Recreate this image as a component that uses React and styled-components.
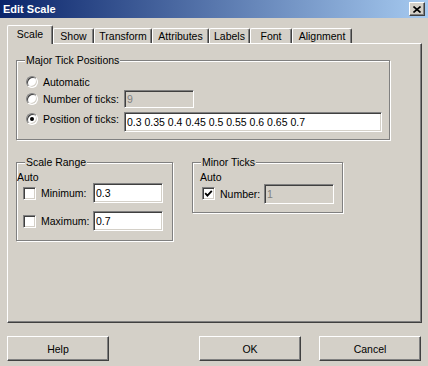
import styled, { createGlobalStyle } from 'styled-components'

const GlobalStyle = createGlobalStyle`
  body {
    margin: 0;
    background: #d4d0c8;
    font-family: "Liberation Sans", Arial, sans-serif;
    font-size: 10.5px;
    color: #000;
  }
  * { box-sizing: border-box; }
`

const tabs = [
  { label: 'Scale', w: 46, active: true },
  { label: 'Show', w: 41 },
  { label: 'Transform', w: 58 },
  { label: 'Attributes', w: 57 },
  { label: 'Labels', w: 41 },
  { label: 'Font', w: 42 },
  { label: 'Alignment', w: 60 }
]

const CloseGlyph = () => (
  <svg width='8' height='7' viewBox='0 0 8 7'>
    <path d='M0.5 0.5 L7.5 6.5 M7.5 0.5 L0.5 6.5' stroke='#000' strokeWidth='1.6' />
  </svg>
)

const CheckGlyph = () => (
  <svg width='9' height='9' viewBox='0 0 9 9'>
    <polyline points='1.2,4.2 3.4,6.6 7.8,1.8' fill='none' stroke='#000' strokeWidth='1.8' />
  </svg>
)

export default function App () {
  return (
    <>
      <GlobalStyle />
      <Window>
        <TitleBar>
          <span>Edit Scale</span>
          <CloseBtn><CloseGlyph /></CloseBtn>
        </TitleBar>
        <Body>
          <TabRow>
            {tabs.map(t => (
              <Tab key={t.label} $w={t.w} $active={t.active}>{t.label}</Tab>
            ))}
          </TabRow>
          <Panel>
            <Group $w={374} $h={80}>
              <Caption>Major Tick Positions</Caption>
              <GroupBody $pt={13} $pl={9}>
                <Row $h={16}>
                  <Radio />
                  <OptionLabel $w={81}>Automatic</OptionLabel>
                </Row>
                <Row $h={18}>
                  <Radio />
                  <OptionLabel $w={81}>Number of ticks:</OptionLabel>
                  <TextField $w={70} $h={18} disabled value='9' readOnly />
                </Row>
                <Row $h={20} $mt={4} $align='flex-start'>
                  <Radio $checked $mt={1} />
                  <OptionLabel $w={81}>Position of ticks:</OptionLabel>
                  <TextField $w={258} $h={20} value='0.3 0.35 0.4 0.45 0.5 0.55 0.6 0.65 0.7' readOnly />
                </Row>
              </GroupBody>
            </Group>
            <GroupRow>
              <Group $w={157} $h={79}>
                <Caption>Scale Range</Caption>
                <GroupBody $pt={8} $pl={0}>
                  <AutoText>Auto</AutoText>
                  <Row $h={20}>
                    <CheckBox $ml={6} />
                    <OptionLabel $w={52}>Minimum:</OptionLabel>
                    <TextField $w={70} $h={20} value='0.3' readOnly />
                  </Row>
                  <Row $h={20} $mt={8}>
                    <CheckBox $ml={6} />
                    <OptionLabel $w={52}>Maximum:</OptionLabel>
                    <TextField $w={70} $h={20} value='0.7' readOnly />
                  </Row>
                </GroupBody>
              </Group>
              <Group $w={151} $h={51}>
                <Caption>Minor Ticks</Caption>
                <GroupBody $pt={8} $pl={7}>
                  <AutoText>Auto</AutoText>
                  <Row $h={21}>
                    <CheckBox $ml={2}><CheckGlyph /></CheckBox>
                    <OptionLabel $w={44}>Number:</OptionLabel>
                    <TextField $w={70} $h={20} disabled value='1' readOnly />
                  </Row>
                </GroupBody>
              </Group>
            </GroupRow>
          </Panel>
          <ButtonRow>
            <PushButton>Help</PushButton>
            <ButtonGroup>
              <PushButton>OK</PushButton>
              <PushButton>Cancel</PushButton>
            </ButtonGroup>
          </ButtonRow>
        </Body>
      </Window>
    </>
  )
}

const Window = styled.div`
  width: 428px;
  height: 366px;
  background: #d4d0c8;
  display: flex;
  flex-direction: column;
  overflow: hidden;
`

const TitleBar = styled.div`
  height: 18px;
  display: flex;
  align-items: center;
  justify-content: space-between;
  padding: 0 3px;
  background: linear-gradient(to right, #0a246a, #a6caf0);
  color: #fff;
  font-weight: bold;
  font-size: 11px;
`

const CloseBtn = styled.button`
  width: 16px;
  height: 14px;
  padding: 0;
  background: #d4d0c8;
  border: 1px solid;
  border-color: #fff #404040 #404040 #fff;
  box-shadow: inset -1px -1px #808080;
  display: flex;
  align-items: center;
  justify-content: center;
`

const Body = styled.div`
  display: flex;
  flex-direction: column;
  padding: 7px 7px 0;
`

const TabRow = styled.div`
  display: flex;
  align-items: flex-end;
  height: 18px;
`

const Tab = styled.div`
  width: ${p => p.$w}px;
  height: ${p => p.$active ? 19 : 15}px;
  margin-bottom: ${p => p.$active ? -1 : 0}px;
  padding-bottom: ${p => p.$active ? 3 : 0}px;
  position: relative;
  z-index: ${p => p.$active ? 1 : 0};
  background: #d4d0c8;
  border-top: 1px solid #fff;
  border-left: 1px solid #fff;
  border-right: 1px solid #404040;
  border-radius: 2px 2px 0 0;
  box-shadow: inset -1px 0 #808080;
  display: flex;
  align-items: center;
  justify-content: center;
  white-space: nowrap;
`

const Panel = styled.div`
  width: 415px;
  height: 280px;
  border-top: 1px solid #fff;
  border-left: 1px solid #fff;
  border-right: 1px solid #404040;
  border-bottom: 1px solid #404040;
  box-shadow: inset -1px -1px #808080;
  padding: 16px 0 0 8px;
  display: flex;
  flex-direction: column;
  gap: 22px;
`

const Group = styled.div`
  position: relative;
  width: ${p => p.$w}px;
  height: ${p => p.$h}px;
  border: 1px solid #808080;
  box-shadow: inset 1px 1px #fff, 1px 1px #fff;
  flex-shrink: 0;
`

const Caption = styled.span`
  position: absolute;
  top: -7px;
  left: 8px;
  padding: 0 1px;
  line-height: 13px;
  background: #d4d0c8;
`

const GroupBody = styled.div`
  display: flex;
  flex-direction: column;
  padding-top: ${p => p.$pt}px;
  padding-left: ${p => p.$pl}px;
`

const GroupRow = styled.div`
  display: flex;
  align-items: flex-start;
  gap: 19px;
`

const Row = styled.div`
  display: flex;
  align-items: ${p => p.$align || 'center'};
  height: ${p => p.$h}px;
  margin-top: ${p => p.$mt || 0}px;
`

const AutoText = styled.div`
  line-height: 12px;
  height: 12px;
`

const Radio = styled.span`
  position: relative;
  width: 12px;
  height: 12px;
  margin-top: ${p => p.$mt || 0}px;
  flex-shrink: 0;
  border-radius: 50%;
  background: #fff;
  border: 1px solid;
  border-color: #808080 #fff #fff #808080;
  box-shadow: inset 1px 1px #404040, inset -1px -1px #d4d0c8;
  &::after {
    content: '';
    display: ${p => p.$checked ? 'block' : 'none'};
    position: absolute;
    left: 3px;
    top: 3px;
    width: 4px;
    height: 4px;
    border-radius: 50%;
    background: #000;
  }
`

const CheckBox = styled.span`
  width: 13px;
  height: 13px;
  margin-left: ${p => p.$ml}px;
  flex-shrink: 0;
  background: #fff;
  border: 1px solid;
  border-color: #808080 #fff #fff #808080;
  box-shadow: inset 1px 1px #404040, inset -1px -1px #d4d0c8;
  display: flex;
  align-items: center;
  justify-content: center;
`

const OptionLabel = styled.span`
  width: ${p => p.$w}px;
  margin-left: 5px;
  line-height: 14px;
  white-space: nowrap;
  flex-shrink: 0;
`

const TextField = styled.input`
  width: ${p => p.$w}px;
  height: ${p => p.$h}px;
  flex-shrink: 0;
  padding: 0 2px;
  margin: 0;
  border: 1px solid;
  border-color: #808080 #fff #fff #808080;
  box-shadow: inset 1px 1px #404040, inset -1px -1px #d4d0c8;
  background: ${p => p.disabled ? '#d4d0c8' : '#fff'};
  color: ${p => p.disabled ? '#808080' : '#000'};
  font: inherit;
  outline: none;
`

const ButtonRow = styled.div`
  display: flex;
  justify-content: space-between;
  margin-top: 13px;
`

const ButtonGroup = styled.div`
  display: flex;
  gap: 18px;
`

const PushButton = styled.button`
  width: 102px;
  height: 25px;
  padding: 0;
  background: #d4d0c8;
  border: 1px solid;
  border-color: #fff #404040 #404040 #fff;
  box-shadow: inset -1px -1px #808080;
  font: inherit;
  color: #000;
`
